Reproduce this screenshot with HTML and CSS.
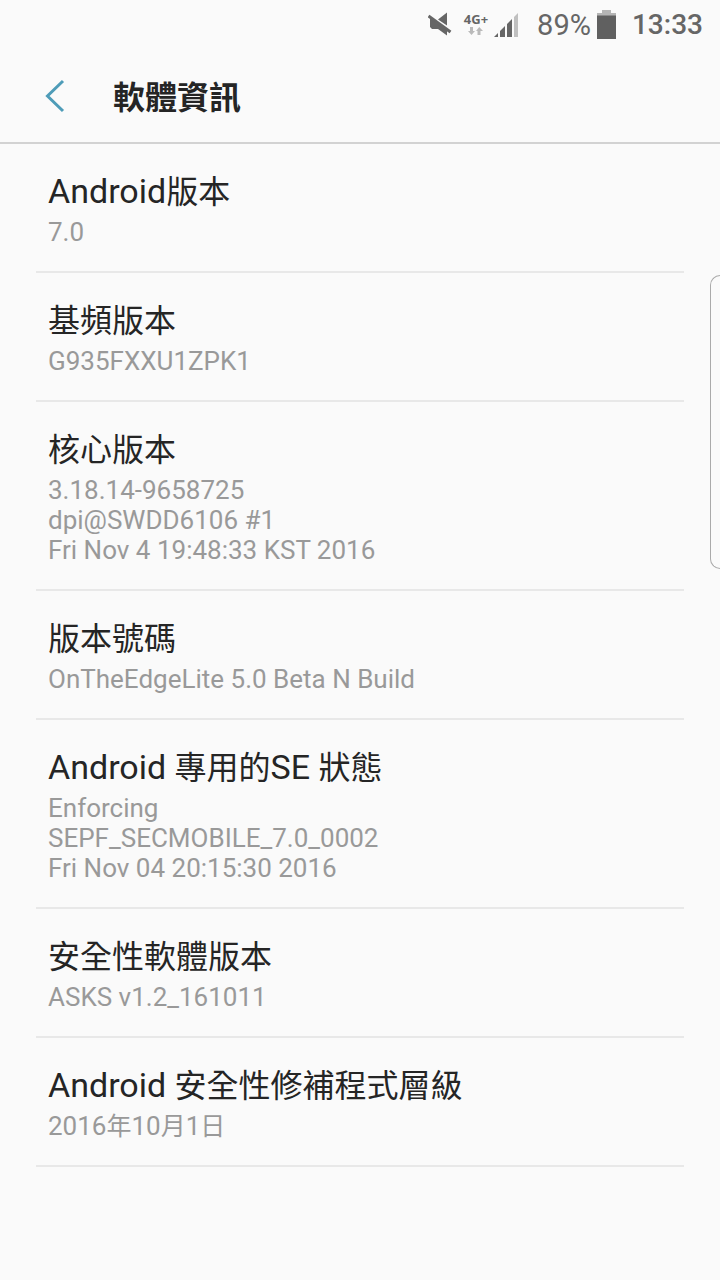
FILE: index.html
```html
<!DOCTYPE html>
<html lang="zh-Hant">
<head>
<meta charset="utf-8">
<meta name="viewport" content="width=device-width, initial-scale=1">
<title>軟體資訊</title>
<link rel="stylesheet" href="styles.css">
</head>
<body>
<div class="status-bar">
  <svg class="mute" width="26" height="26" viewBox="0 0 26 26" aria-hidden="true">
    <path d="M2 6L10 10L19 17V23.500L10 17H4L2 15Z M10 7.500L19 0.500V13.500Z" fill="#666"/>
    <path d="M0.500 4L22.500 20" stroke="#666" stroke-width="3" fill="none"/>
  </svg>
  <div class="network">
    <span class="network-type">4G+</span>
    <svg width="15" height="9" viewBox="0 0 15 9" aria-hidden="true">
      <path d="M2 0H5V4H7L3.500 8L0 4H2Z M9.500 8H12.500V4H15L11.250 0L8 4H9.500Z" fill="#bababa"/>
    </svg>
  </div>
  <svg class="signal" width="25" height="25" viewBox="0 0 25 25" aria-hidden="true">
    <path d="M0 24L4 20V24Z M6 24V18L11 13V24Z M13 24V11L18 6V24Z" fill="#666"/>
    <path d="M20 24V4L24 0V24Z" fill="#c0c0c0"/>
  </svg>
  <span class="battery-level">89%</span>
  <svg class="battery" width="20" height="30" viewBox="0 0 20 30" aria-hidden="true">
    <path d="M5 0H14V3H19V6H0V3H5Z" fill="#b5b5b5"/>
    <path d="M0 5.500H19V29H0Z" fill="#606060"/>
  </svg>
  <time class="clock">13:33</time>
</div>
<header class="app-bar">
  <button class="back" type="button" aria-label="返回">
    <svg width="20" height="34" viewBox="0 0 20 34" aria-hidden="true">
      <path d="M18 2L2.500 17L18 32" fill="none" stroke="#4e9cb8" stroke-width="3"/>
    </svg>
  </button>
  <h1 class="page-title">軟體資訊</h1>
</header>
<main class="info-list">
  <section class="item">
    <h2 class="item-title">Android<span class="han">版本</span></h2>
    <p class="item-value">7.0</p>
  </section>
  <section class="item">
    <h2 class="item-title"><span class="han">基頻版本</span></h2>
    <p class="item-value">G935FXXU1ZPK1</p>
  </section>
  <section class="item">
    <h2 class="item-title"><span class="han">核心版本</span></h2>
    <p class="item-value">3.18.14-9658725<br>dpi@SWDD6106 #1<br>Fri Nov 4 19:48:33 KST 2016</p>
  </section>
  <section class="item">
    <h2 class="item-title"><span class="han">版本號碼</span></h2>
    <p class="item-value">OnTheEdgeLite 5.0 Beta N Build</p>
  </section>
  <section class="item">
    <h2 class="item-title">Android <span class="han">專用的</span>SE <span class="han">狀態</span></h2>
    <p class="item-value">Enforcing<br>SEPF_SECMOBILE_7.0_0002<br>Fri Nov 04 20:15:30 2016</p>
  </section>
  <section class="item">
    <h2 class="item-title"><span class="han">安全性軟體版本</span></h2>
    <p class="item-value">ASKS v1.2_161011</p>
  </section>
  <section class="item">
    <h2 class="item-title">Android <span class="han">安全性修補程式層級</span></h2>
    <p class="item-value">2016<span class="han">年</span>10<span class="han">月</span>1<span class="han">日</span></p>
  </section>
</main>
<div class="edge-handle"></div>
</body>
</html>
```
FILE: styles.css
```css
* {
  box-sizing: border-box;
}

body {
  margin: 0;
  min-height: 100vh;
  overflow-x: hidden;
  background: #fafafa;
  color: #252525;
  font-family: Roboto, "Noto Sans CJK TC", sans-serif;
}

h1, h2, p {
  margin: 0;
  font-weight: 400;
}

.status-bar {
  display: flex;
  align-items: center;
  justify-content: flex-end;
  height: 50px;
  padding-right: 17px;
  color: #666;
  font-size: 29px;
  line-height: 50px;
}

.mute {
  margin-right: 10px;
}

.network {
  display: flex;
  flex-direction: column;
  align-items: center;
  gap: 1px;
  margin-right: 6px;
  padding-bottom: 2px;
}

.network-type {
  font-family: "Open Sans", sans-serif;
  font-size: 13px;
  font-weight: 700;
  line-height: 14px;
}

.signal {
  margin-right: 18px;
}

.battery {
  margin: 0 15px 0 6px;
}

.clock {
  font-size: 28px;
  font-weight: 500;
}

.app-bar {
  display: flex;
  align-items: center;
  height: 94px;
  padding: 0 36px;
  border-bottom: 2px solid #d2d2d2;
}

.back {
  display: flex;
  align-items: center;
  width: 77px;
  height: 64px;
  padding: 0 9px;
  border: 0;
  background: none;
}

.page-title {
  padding-top: 3px;
  font-size: 32px;
  font-weight: 700;
  line-height: 48px;
}

.info-list {
  padding: 0 36px;
}

.item {
  padding: 27px 12px 24px;
  border-bottom: 2px solid #e8e8e8;
}

.item-title {
  padding-bottom: 6px;
  font-size: 34px;
  line-height: 40px;
}

.item-title .han {
  font-size: 32px;
}

.item-value {
  color: #999;
  font-size: 26px;
  line-height: 30px;
}

.item-value .han {
  font-size: 25px;
}

.han {
  line-height: 1;
}

.edge-handle {
  position: absolute;
  top: 275px;
  right: 0;
  width: 10px;
  height: 294px;
  border: 1px solid #aaa;
  border-right: 0;
  border-radius: 12px 0 0 12px;
}
```
